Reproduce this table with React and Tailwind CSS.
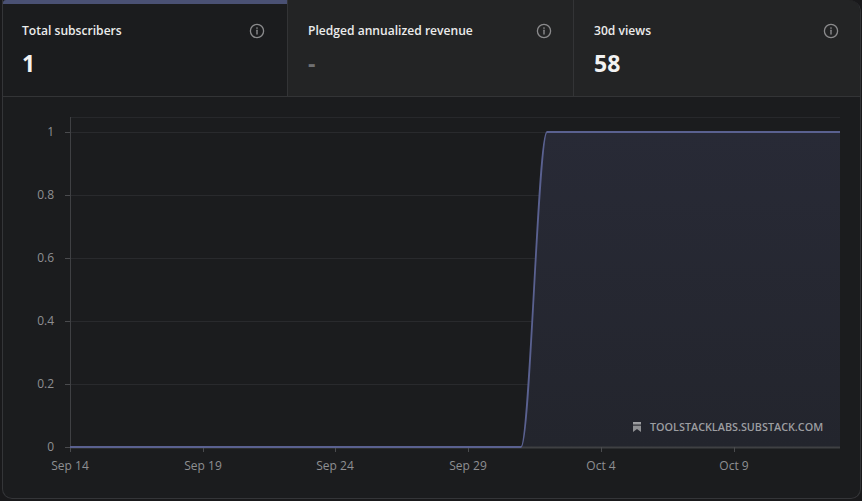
import React from "react";

const font = { fontFamily: '"Segoe UI", "Open Sans", "Noto Sans", sans-serif' };

function InfoIcon() {
  return (
    <svg width="16" height="16" viewBox="0 0 16 16" fill="none">
      <circle cx="8" cy="8" r="6.6" stroke="#8b8b8d" strokeWidth="1.3" />
      <line x1="8" y1="7.2" x2="8" y2="11" stroke="#8b8b8d" strokeWidth="1.4" strokeLinecap="round" />
      <circle cx="8" cy="5" r="0.85" fill="#8b8b8d" />
    </svg>
  );
}

function StatCard({ title, value, selected, muted, last }) {
  return (
    <div
      className={
        "relative flex flex-col pt-[21px] " +
        (selected ? "bg-[#1b1c1e] pl-[19px] pr-[22px] " : "bg-[#232425] pl-5 pr-[21px] ") +
        (last ? "" : "border-r border-[#333436]")
      }
    >
      {selected && (
        <div className="absolute left-0 right-0 top-0 h-[4px] rounded-tl-[3px] bg-[#4a5174]" />
      )}
      <div className="flex items-center justify-between">
        <span className="text-[12.1px] font-semibold leading-[20px] text-[#ececec]">{title}</span>
        <InfoIcon />
      </div>
      <div
        className={
          "mt-[6px] text-[23px] font-bold leading-[32px] " +
          (muted ? "text-[#6f7072]" : "text-[#f2f2f2]")
        }
      >
        {value}
      </div>
    </div>
  );
}

function Chart() {
  const yTicks = [
    { v: "1", y: 132 },
    { v: "0.8", y: 195 },
    { v: "0.6", y: 258 },
    { v: "0.4", y: 321 },
    { v: "0.2", y: 384 },
    { v: "0", y: 447 },
  ];
  const xTicks = [
    { v: "Sep 14", x: 70 },
    { v: "Sep 19", x: 203 },
    { v: "Sep 24", x: 335 },
    { v: "Sep 29", x: 468 },
    { v: "Oct 4", x: 601 },
    { v: "Oct 9", x: 734 },
  ];
  const curve = "M70,447 L521,447 C530,447 538,132 547,132 L840,132";
  const area = "M521,447 C530,447 538,132 547,132 L840,132 L840,447 Z";
  return (
    <svg
      width="856"
      height="400"
      viewBox="3 97 856 400"
      className="block"
      style={font}
    >
      <defs>
        <linearGradient id="fillg" x1="0" y1="0" x2="0" y2="1">
          <stop offset="0" stopColor="#282a36" />
          <stop offset="1" stopColor="#23252d" />
        </linearGradient>
      </defs>
      <line x1="70" y1="117.5" x2="840" y2="117.5" stroke="#27282b" strokeWidth="1" />
      {yTicks.map((t) => (
        <g key={t.v}>
          <line x1="70" y1={t.y + 0.5} x2="840" y2={t.y + 0.5} stroke="#292a2d" strokeWidth="1" />
          <line x1="65" y1={t.y + 0.5} x2="70" y2={t.y + 0.5} stroke="#4a4b4e" strokeWidth="1" />
          <text
            x="54"
            y={t.y + 4}
            textAnchor="end"
            fontSize="12"
            fill="#8e8f92"
          >
            {t.v}
          </text>
        </g>
      ))}
      <path d={area} fill="url(#fillg)" />
      <line x1="70.5" y1="117" x2="70.5" y2="448" stroke="#3f4043" strokeWidth="1" />
      <line x1="70" y1="447.5" x2="840" y2="447.5" stroke="#3f4043" strokeWidth="2" />
      {xTicks.map((t) => (
        <g key={t.v}>
          <line x1={t.x + 0.5} y1="447" x2={t.x + 0.5} y2="452" stroke="#4a4b4e" strokeWidth="1" />
          <text x={t.x} y="470" textAnchor="middle" fontSize="12" fill="#8e8f92">
            {t.v}
          </text>
        </g>
      ))}
      <path d={curve} fill="none" stroke="#5a6190" strokeWidth="1.8" />
      <g fill="#8f9093">
        <path d="M633,422 L641,422 L641,432 L637,429 L633,432 Z" />
        <rect x="633" y="422" width="8" height="1.6" fill="#a0a1a4" />
        <rect x="633" y="424.6" width="8" height="1" fill="#1f2027" />
      </g>
      <text
        x="650"
        y="431"
        fontSize="10.8"
        fontWeight="600"
        fill="#9d9ea1"
      >
        TOOLSTACKLABS.SUBSTACK.COM
      </text>
    </svg>
  );
}

export default function App() {
  return (
    <div className="w-[862px] h-[501px] bg-[#19191b] overflow-hidden" style={font}>
      <div className="ml-[2px] mr-[1px] h-[499px] border-l border-r border-b border-[#343538] rounded-tr-[12px] rounded-br-[10px] rounded-bl-[10px] overflow-hidden flex flex-col bg-[#1b1c1e]">
        <div className="grid grid-cols-[285px_286px_1fr] h-[97px] border-b border-[#333436]">
          <StatCard title="Total subscribers" value="1" selected />
          <StatCard title="Pledged annualized revenue" value="-" muted />
          <StatCard title="30d views" value="58" last />
        </div>
        <div className="flex-1">
          <Chart />
        </div>
      </div>
    </div>
  );
}
